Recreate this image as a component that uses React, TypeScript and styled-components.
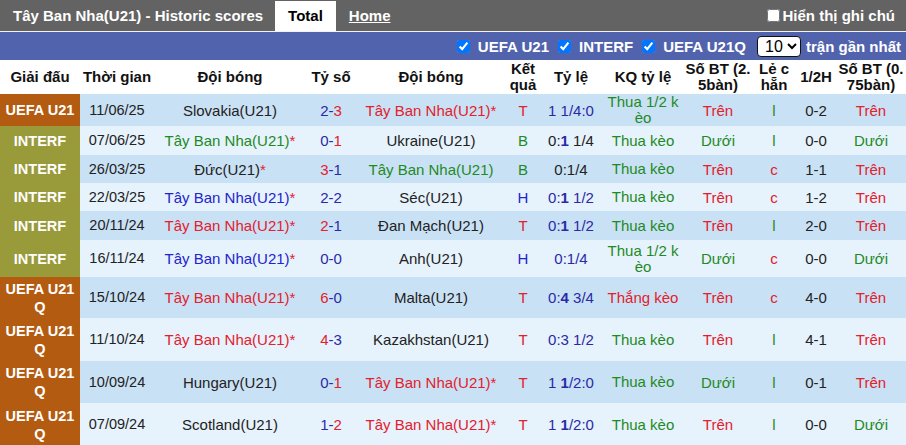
import React from "react";
import styled, { createGlobalStyle } from "styled-components";

const GlobalStyle = createGlobalStyle`
  html, body { margin: 0; padding: 0; background: #fff; }
  body { font-family: "Liberation Sans", Arial, sans-serif; font-size: 15px; color: #222; }
`;

const C = {
  red: "#e3202c",
  green: "#1f8a1f",
  blue: "#2424cc",
  navy: "#2a2aa6",
  black: "#222",
};

const Page = styled.div`
  width: 906px;
  overflow: hidden;
`;

const TopBar = styled.div`
  display: flex;
  align-items: stretch;
  height: 31px;
  background: #636363;
  border-bottom: 1px solid #f2f2f2;
  color: #fff;
`;

const Title = styled.div`
  font-weight: bold;
  font-size: 15px;
  line-height: 31px;
  padding-left: 13px;
  margin-right: 12px;
  white-space: nowrap;
`;

const Tab = styled.div<{ $active?: boolean }>`
  font-weight: bold;
  font-size: 15px;
  line-height: 30px;
  margin-top: 1px;
  padding: 0 ${(p) => (p.$active ? "13px" : "0")};
  margin-right: 13px;
  background: ${(p) => (p.$active ? "#fff" : "transparent")};
  color: ${(p) => (p.$active ? "#000" : "#fff")};
  text-decoration: ${(p) => (p.$active ? "none" : "underline")};
`;

const Spacer = styled.div`
  flex: 1;
`;

const NoteToggle = styled.label`
  display: flex;
  align-items: center;
  font-weight: bold;
  font-size: 15px;
  padding-right: 11px;
  white-space: nowrap;
`;

const Check = styled.input`
  width: 13px;
  height: 13px;
  margin: 0 3px 0 4px;
  accent-color: #0075ff;
`;

const FilterBar = styled.div`
  display: flex;
  align-items: center;
  justify-content: flex-end;
  height: 28px;
  background: #5263ad;
  color: #fff;
  font-weight: bold;
  font-size: 15px;
  padding-right: 5px;
`;

const FilterItem = styled.label`
  display: flex;
  align-items: center;
  margin-left: 6px;
  white-space: nowrap;
`;

const FilterCheck = styled(Check)`
  margin: 0 8px 0 3px;
`;

const CountSelect = styled.select`
  height: 21px;
  width: 44px;
  margin: 0 5px 0 11px;
  font-family: "Liberation Sans", Arial, sans-serif;
  font-size: 16px;
  border: 1.5px solid #111;
  border-radius: 4px;
  background: #fff;
  color: #000;
  padding: 0 0 0 3px;
`;

const Table = styled.table`
  width: 906px;
  border-collapse: collapse;
  table-layout: fixed;
`;

const HeadCell = styled.th`
  height: 34px;
  padding: 0;
  font-weight: bold;
  font-size: 15px;
  line-height: 16px;
  color: #111;
  background: #fff;
  text-align: center;
  vertical-align: middle;
  white-space: nowrap;
  overflow: visible;
`;

const Row = styled.tr<{ $h: number; $alt: boolean }>`
  height: ${(p) => p.$h}px;
  background: ${(p) => (p.$alt ? "#e6f2fc" : "#c9e1f5")};
`;

const Cell = styled.td<{ $color?: string }>`
  padding: 0 2px;
  text-align: center;
  vertical-align: middle;
  line-height: 17px;
  color: ${(p) => p.$color || C.black};
  white-space: nowrap;
`;

const DateCell = styled(Cell)`
  font-size: 14.5px;
`;

const WrapCell = styled(Cell)`
  line-height: 16px;
`;

const LeagueCell = styled.td<{ $bg: string }>`
  padding: 0 4px;
  text-align: center;
  vertical-align: middle;
  background: ${(p) => p.$bg};
  color: #fff;
  font-weight: bold;
  font-size: 14.5px;
  line-height: 18px;
`;

const Star = styled.span`
  color: ${C.red};
`;

const Goal = styled.span<{ $color: string }>`
  color: ${(p) => p.$color};
`;

const Strong = styled.b`
  color: ${C.navy};
`;

type Team = { name: string; color: string; star?: boolean };
type Seg = string | { b: string };
type Match = {
  league: "UEFA U21" | "INTERF" | "UEFA U21 Q";
  date: string;
  home: Team;
  away: Team;
  score: [number, number];
  res: "T" | "B" | "H";
  hc: Seg[];
  hcColor: string;
  kq: string[];
  kqColor: string;
  bt: "Trên" | "Dưới";
  oe: "l" | "c";
  half: string;
  bt2: "Trên" | "Dưới";
  h: number;
};

const TBN = "Tây Ban Nha(U21)";
const tk = ["Thua kèo"];
const t12 = ["Thua 1/2 k", "èo"];

const matches: Match[] = [
  { league: "UEFA U21", date: "11/06/25", home: { name: "Slovakia(U21)", color: C.black }, away: { name: TBN, color: C.red, star: true }, score: [2, 3], res: "T", hc: ["1 1/4:0"], hcColor: C.navy, kq: t12, kqColor: C.green, bt: "Trên", oe: "l", half: "0-2", bt2: "Trên", h: 32 },
  { league: "INTERF", date: "07/06/25", home: { name: TBN, color: C.green, star: true }, away: { name: "Ukraine(U21)", color: C.black }, score: [0, 1], res: "B", hc: ["0:", { b: "1" }, " 1/4"], hcColor: C.black, kq: tk, kqColor: C.green, bt: "Dưới", oe: "l", half: "0-0", bt2: "Dưới", h: 29 },
  { league: "INTERF", date: "26/03/25", home: { name: "Đức(U21)", color: C.black, star: true }, away: { name: TBN, color: C.green }, score: [3, 1], res: "B", hc: ["0:1/4"], hcColor: C.black, kq: tk, kqColor: C.green, bt: "Trên", oe: "c", half: "1-1", bt2: "Trên", h: 28 },
  { league: "INTERF", date: "22/03/25", home: { name: TBN, color: C.blue, star: true }, away: { name: "Séc(U21)", color: C.black }, score: [2, 2], res: "H", hc: ["0:", { b: "1" }, " 1/2"], hcColor: C.navy, kq: tk, kqColor: C.green, bt: "Trên", oe: "c", half: "1-2", bt2: "Trên", h: 28 },
  { league: "INTERF", date: "20/11/24", home: { name: TBN, color: C.red, star: true }, away: { name: "Đan Mạch(U21)", color: C.black }, score: [2, 1], res: "T", hc: ["0:", { b: "1" }, " 1/2"], hcColor: C.navy, kq: tk, kqColor: C.green, bt: "Trên", oe: "l", half: "2-0", bt2: "Trên", h: 29 },
  { league: "INTERF", date: "16/11/24", home: { name: TBN, color: C.blue, star: true }, away: { name: "Anh(U21)", color: C.black }, score: [0, 0], res: "H", hc: ["0:1/4"], hcColor: C.navy, kq: t12, kqColor: C.green, bt: "Dưới", oe: "c", half: "0-0", bt2: "Dưới", h: 37 },
  { league: "UEFA U21 Q", date: "15/10/24", home: { name: TBN, color: C.red, star: true }, away: { name: "Malta(U21)", color: C.black }, score: [6, 0], res: "T", hc: ["0:", { b: "4" }, " 3/4"], hcColor: C.navy, kq: ["Thắng kèo"], kqColor: C.red, bt: "Trên", oe: "c", half: "4-0", bt2: "Trên", h: 41 },
  { league: "UEFA U21 Q", date: "11/10/24", home: { name: TBN, color: C.red, star: true }, away: { name: "Kazakhstan(U21)", color: C.black }, score: [4, 3], res: "T", hc: ["0:3 1/2"], hcColor: C.navy, kq: tk, kqColor: C.green, bt: "Trên", oe: "l", half: "4-1", bt2: "Trên", h: 43 },
  { league: "UEFA U21 Q", date: "10/09/24", home: { name: "Hungary(U21)", color: C.black }, away: { name: TBN, color: C.red, star: true }, score: [0, 1], res: "T", hc: ["1 ", { b: "1" }, "/2:0"], hcColor: C.navy, kq: tk, kqColor: C.green, bt: "Dưới", oe: "l", half: "0-1", bt2: "Trên", h: 42 },
  { league: "UEFA U21 Q", date: "07/09/24", home: { name: "Scotland(U21)", color: C.black }, away: { name: TBN, color: C.red, star: true }, score: [1, 2], res: "T", hc: ["1 ", { b: "1" }, "/2:0"], hcColor: C.navy, kq: tk, kqColor: C.green, bt: "Trên", oe: "l", half: "0-0", bt2: "Dưới", h: 43 },
];

const leagueBg: Record<Match["league"], string> = {
  "UEFA U21": "#b35b10",
  INTERF: "#999a3a",
  "UEFA U21 Q": "#b35b10",
};

const resColor = { T: C.red, B: C.green, H: C.blue };
const btColor = { "Trên": C.red, "Dưới": C.green };
const oeColor = { l: C.green, c: C.red };

const widths = [80, 74, 152, 50, 150, 34, 62, 82, 68, 44, 40, 70];

const headers: React.ReactNode[] = [
  "Giải đấu",
  "Thời gian",
  "Đội bóng",
  "Tỷ số",
  "Đội bóng",
  <>Kết<br />quả</>,
  "Tỷ lệ",
  "KQ tỷ lệ",
  <>Số BT (2.<br />5bàn)</>,
  <>Lẻ c<br />hẵn</>,
  "1/2H",
  <>Số BT (0.<br />75bàn)</>,
];

const TeamName = ({ t }: { t: Team }) => (
  <>
    {t.name}
    {t.star && <Star>*</Star>}
  </>
);

const Score = ({ s }: { s: [number, number] }) => {
  const [a, b] = s;
  return (
    <>
      <Goal $color={a > b ? C.red : C.navy}>{a}</Goal>
      <Goal $color={C.navy}>-</Goal>
      <Goal $color={b > a ? C.red : C.navy}>{b}</Goal>
    </>
  );
};

export default function App() {
  return (
    <Page>
      <GlobalStyle />
      <TopBar>
        <Title>Tây Ban Nha(U21) - Historic scores</Title>
        <Tab $active>Total</Tab>
        <Tab>Home</Tab>
        <Spacer />
        <NoteToggle>
          <Check type="checkbox" />
          Hiển thị ghi chú
        </NoteToggle>
      </TopBar>
      <FilterBar>
        {["UEFA U21", "INTERF", "UEFA U21Q"].map((l) => (
          <FilterItem key={l}>
            <FilterCheck type="checkbox" defaultChecked />
            {l}
          </FilterItem>
        ))}
        <CountSelect defaultValue="10">
          <option value="10">10</option>
          <option value="20">20</option>
        </CountSelect>
        trận gần nhất
      </FilterBar>
      <Table>
        <colgroup>
          {widths.map((w, i) => (
            <col key={i} style={{ width: w }} />
          ))}
        </colgroup>
        <thead>
          <tr>
            {headers.map((h, i) => (
              <HeadCell key={i}>{h}</HeadCell>
            ))}
          </tr>
        </thead>
        <tbody>
          {matches.map((m, i) => (
            <Row key={i} $h={m.h} $alt={i % 2 === 1}>
              <LeagueCell $bg={leagueBg[m.league]}>{m.league}</LeagueCell>
              <DateCell>{m.date}</DateCell>
              <Cell $color={m.home.color}>
                <TeamName t={m.home} />
              </Cell>
              <Cell>
                <Score s={m.score} />
              </Cell>
              <Cell $color={m.away.color}>
                <TeamName t={m.away} />
              </Cell>
              <Cell $color={resColor[m.res]}>{m.res}</Cell>
              <Cell $color={m.hcColor}>
                {m.hc.map((s, j) =>
                  typeof s === "string" ? <React.Fragment key={j}>{s}</React.Fragment> : <Strong key={j}>{s.b}</Strong>
                )}
              </Cell>
              <WrapCell $color={m.kqColor}>
                {m.kq.map((l, j) => (
                  <React.Fragment key={j}>
                    {j > 0 && <br />}
                    {l}
                  </React.Fragment>
                ))}
              </WrapCell>
              <Cell $color={btColor[m.bt]}>{m.bt}</Cell>
              <Cell $color={oeColor[m.oe]}>{m.oe}</Cell>
              <Cell>{m.half}</Cell>
              <Cell $color={btColor[m.bt2]}>{m.bt2}</Cell>
            </Row>
          ))}
        </tbody>
      </Table>
    </Page>
  );
}
